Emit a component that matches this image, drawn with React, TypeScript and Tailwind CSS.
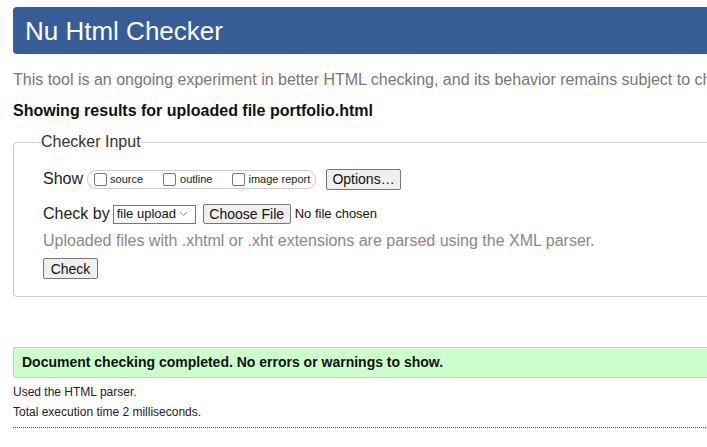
export default function App() {
  return (
    <div className="w-[707px] h-[447px] overflow-hidden bg-white font-['Liberation_Sans',Arial,sans-serif]">
      <div className="w-[900px] pl-[13px] pt-[7px]">
        <header className="h-[47px] bg-[#365d95] rounded-l-[4px] pl-[12px] flex items-center">
          <h1 className="text-[26px] text-white leading-none">Nu Html Checker</h1>
        </header>

        <p className="mt-[17px] text-[16px] leading-[18px] text-[#777] whitespace-nowrap">
          This tool is an ongoing experiment in better HTML checking, and its behavior remains subject to change
        </p>
        <p className="mt-[13px] text-[16px] leading-[18px] font-bold text-[#111] whitespace-nowrap">
          Showing results for uploaded file portfolio.html
        </p>

        <fieldset className="mt-[13px] border border-[#ccc] rounded-[4px] pl-[29px] pb-[17px] h-[164px]">
          <legend className="ml-[-2px] text-[16px] leading-[18px] text-[#333]">Checker Input</legend>

          <div className="mt-[17px] flex items-center h-[22px]">
            <span className="text-[16px] text-[#222]">Show</span>
            <div className="ml-[4px] h-[19px] w-[229px] border border-[#ccc] rounded-[9px] flex items-center pl-[6px] text-[11px] text-[#222]">
              <span className="w-[13px] h-[13px] border border-[#767676] rounded-[2px] bg-white" />
              <span className="ml-[3px]">source</span>
              <span className="ml-[20px] w-[13px] h-[13px] border border-[#767676] rounded-[2px] bg-white" />
              <span className="ml-[4px]">outline</span>
              <span className="ml-[20px] w-[13px] h-[13px] border border-[#767676] rounded-[2px] bg-white" />
              <span className="ml-[3px]">image report</span>
            </div>
            <button className="ml-[10px] h-[21px] w-[75px] border border-[#767676] bg-[#efefef] rounded-[2px] text-[14px] text-[#111] leading-none">
              Options…
            </button>
          </div>

          <div className="mt-[14px] flex items-center h-[20px]">
            <span className="text-[16px] text-[#222]">Check by</span>
            <div className="ml-[3px] h-[19px] w-[83px] border border-[#767676] flex items-center pl-[3px] text-[13px] text-[#111]">
              <span>file upload</span>
              <svg className="ml-[3px]" width="9" height="6" viewBox="0 0 9 6">
                <path d="M1 1l3.5 3.5L8 1" fill="none" stroke="#888" strokeWidth="1" />
              </svg>
            </div>
            <button className="ml-[7px] h-[20px] w-[88px] border border-[#767676] bg-[#efefef] rounded-[2px] text-[14px] text-[#111] leading-none">
              Choose File
            </button>
            <span className="ml-[4px] text-[13px] text-[#111]">No file chosen</span>
          </div>

          <p className="mt-[8px] text-[16px] leading-[18px] text-[#888] whitespace-nowrap">
            Uploaded files with .xhtml or .xht extensions are parsed using the XML parser.
          </p>

          <button className="mt-[8px] h-[21px] w-[55px] border border-[#767676] bg-[#efefef] rounded-[2px] text-[14px] text-[#111] leading-none">
            Check
          </button>
        </fieldset>

        <div className="mt-[50px] h-[31px] bg-[#ccffcc] border-y border-l border-[#ccc] rounded-l-[3px] flex items-center pl-[8px]">
          <span className="text-[14px] font-bold text-[#111]">Document checking completed. No errors or warnings to show.</span>
        </div>

        <p className="mt-[7px] text-[12px] leading-[14px] text-[#222]">Used the HTML parser.</p>
        <p className="mt-[6px] text-[12px] leading-[14px] text-[#222]">Total execution time 2 milliseconds.</p>
        <div className="mt-[8px] border-t border-dotted border-[#555]" />
      </div>
    </div>
  );
}
